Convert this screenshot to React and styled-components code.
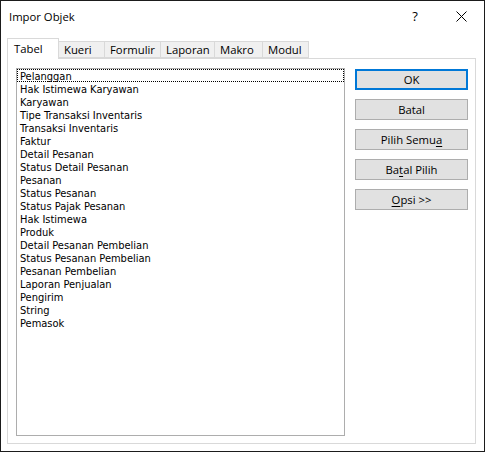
import React from "react"
import styled, { createGlobalStyle } from "styled-components"

const GlobalStyle = createGlobalStyle`
  html, body {
    margin: 0;
    padding: 0;
    background: #ffffff;
  }
  * {
    box-sizing: border-box;
  }
`

const Window = styled.div`
  width: 485px;
  height: 452px;
  border: 1px solid #1b1b1b;
  background: #ffffff;
  display: flex;
  flex-direction: column;
  font-family: "Segoe UI", "Open Sans", "Liberation Sans", sans-serif;
  color: #000;
`

const TitleBar = styled.div`
  height: 30px;
  display: flex;
  align-items: center;
  padding-left: 8px;
`

const Title = styled.div`
  flex: 1;
  font-size: 11.3px;
`

const CaptionButton = styled.div`
  width: 46px;
  height: 30px;
  display: flex;
  align-items: center;
  justify-content: center;
  font-size: 13px;
`

const Body = styled.div`
  flex: 1;
  display: flex;
  flex-direction: column;
  padding: 7px 8px 7px 6px;
`

const TabStrip = styled.div`
  height: 20px;
  display: flex;
  align-items: flex-end;
  position: relative;
  z-index: 1;
`

const Tab = styled.div`
  height: ${(p) => (p.$active ? "21px" : "17px")};
  margin-bottom: ${(p) => (p.$active ? "-1px" : "0")};
  padding: ${(p) => (p.$active ? "2px 6px 0 6px" : "0 5px")};
  width: ${(p) => p.$w}px;
  border: 1px solid #d9d9d9;
  border-bottom: ${(p) => (p.$active ? "none" : "1px solid #d9d9d9")};
  border-left: ${(p) => (p.$first || p.$active ? "1px solid #d9d9d9" : "none")};
  background: ${(p) => (p.$active ? "#ffffff" : "#f0f0f0")};
  font-size: 11.3px;
  line-height: ${(p) => (p.$active ? "16px" : "14px")};
  display: flex;
  align-items: ${(p) => (p.$active ? "flex-start" : "center")};
  white-space: nowrap;
`

const Panel = styled.div`
  flex: 1;
  width: 469px;
  border: 1px solid #d9d9d9;
  background: #ffffff;
  display: flex;
  padding: 9px 0 7px 8px;
  gap: 10px;
`

const ListBox = styled.div`
  width: 329px;
  height: 100%;
  border: 1px solid #adadad;
  padding: 0;
  font-family: Tahoma, "DejaVu Sans Condensed", "Liberation Sans", sans-serif;
  font-size: 11px;
`

const Item = styled.div`
  height: 13px;
  line-height: 13px;
  padding: 1px 0 0 3px;
  white-space: nowrap;
  outline: ${(p) => (p.$focused ? "1px dotted #000" : "none")};
  outline-offset: -1px;
`

const ButtonColumn = styled.div`
  display: flex;
  flex-direction: column;
  gap: 9px;
  padding-top: 1px;
`

const Button = styled.div`
  width: 113px;
  height: 21px;
  background: #e1e1e1;
  border: ${(p) => (p.$default ? "2px solid #0078d7" : "1px solid #adadad")};
  display: flex;
  align-items: center;
  justify-content: center;
  font-size: 11.3px;
  padding-bottom: 1px;
  u {
    text-decoration: underline;
    text-underline-offset: 2px;
  }
`

const tabs = [
  { label: "Tabel", w: 52 },
  { label: "Kueri", w: 46 },
  { label: "Formulir", w: 56 },
  { label: "Laporan", w: 54 },
  { label: "Makro", w: 48 },
  { label: "Modul", w: 46 },
]

const tables = [
  "Pelanggan",
  "Hak Istimewa Karyawan",
  "Karyawan",
  "Tipe Transaksi Inventaris",
  "Transaksi Inventaris",
  "Faktur",
  "Detail Pesanan",
  "Status Detail Pesanan",
  "Pesanan",
  "Status Pesanan",
  "Status Pajak Pesanan",
  "Hak Istimewa",
  "Produk",
  "Detail Pesanan Pembelian",
  "Status Pesanan Pembelian",
  "Pesanan Pembelian",
  "Laporan Penjualan",
  "Pengirim",
  "String",
  "Pemasok",
]

const CloseIcon = () => (
  <svg width="11" height="11" viewBox="0 0 11 11">
    <path d="M0.5 0.5 L10.5 10.5 M10.5 0.5 L0.5 10.5" stroke="#000" strokeWidth="1" fill="none" />
  </svg>
)

const App = () => (
  <>
    <GlobalStyle />
    <Window>
      <TitleBar>
        <Title>Impor Objek</Title>
        <CaptionButton>?</CaptionButton>
        <CaptionButton>
          <CloseIcon />
        </CaptionButton>
      </TitleBar>
      <Body>
        <TabStrip>
          {tabs.map((t, i) => (
            <Tab key={t.label} $w={t.w} $active={i === 0} $first={i === 0}>
              {t.label}
            </Tab>
          ))}
        </TabStrip>
        <Panel>
          <ListBox>
            {tables.map((name, i) => (
              <Item key={name} $focused={i === 0}>
                {name}
              </Item>
            ))}
          </ListBox>
          <ButtonColumn>
            <Button $default>OK</Button>
            <Button>Batal</Button>
            <Button>
              Pilih Semu<u>a</u>
            </Button>
            <Button>
              Ba<u>t</u>al Pilih
            </Button>
            <Button>
              <u>O</u>psi &gt;&gt;
            </Button>
          </ButtonColumn>
        </Panel>
      </Body>
    </Window>
  </>
)

export default App
